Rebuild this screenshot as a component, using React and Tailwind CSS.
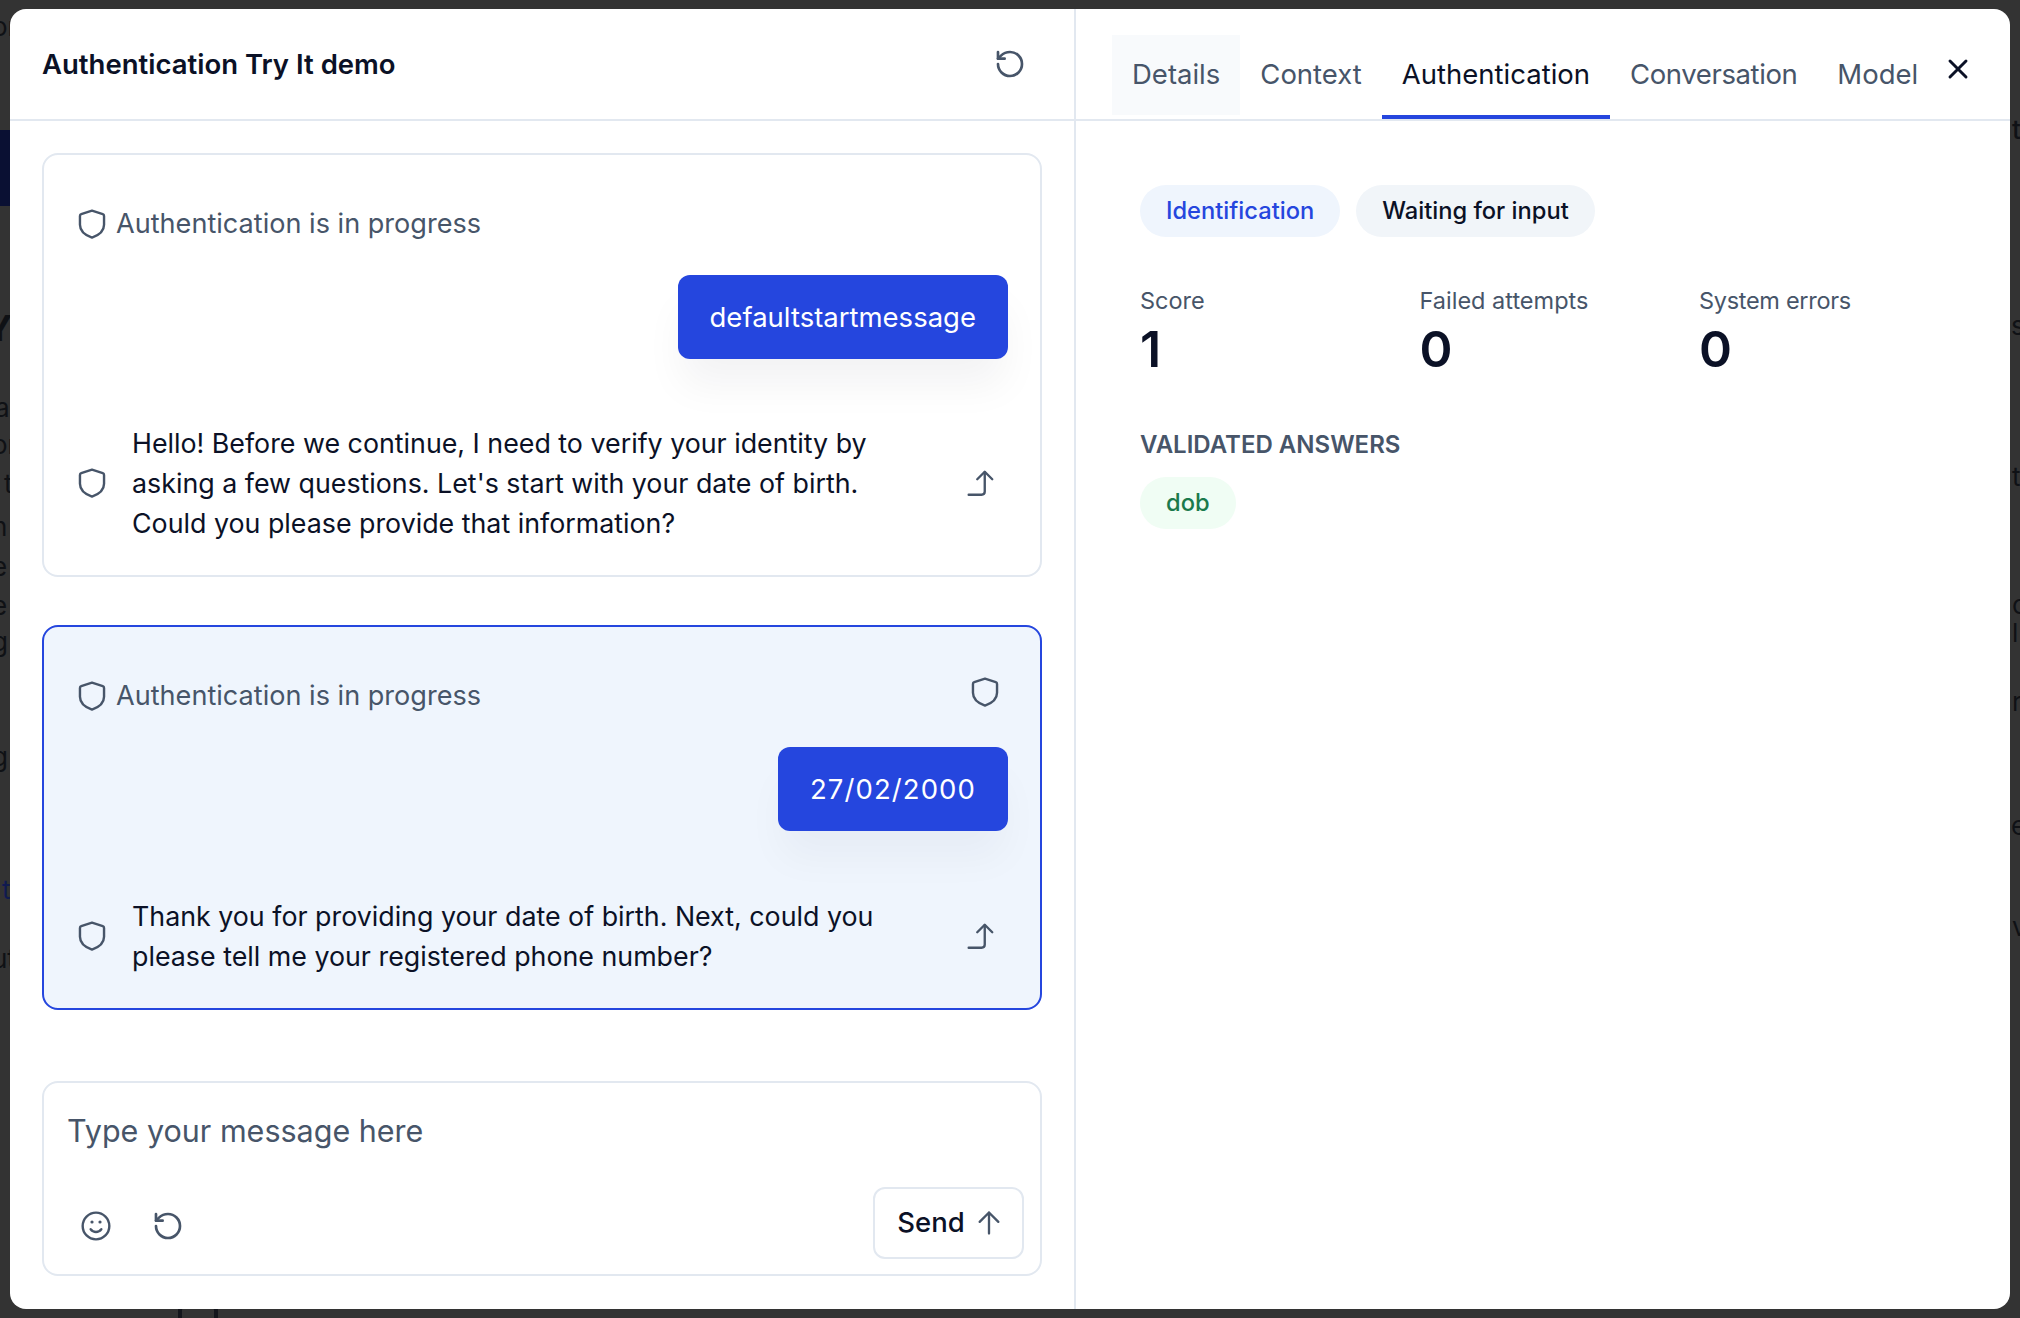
const refreshPath = "M3 12a9 9 0 1 0 9-9 9.75 9.75 0 0 0-6.74 2.74L3 8";

function Shield({ className = "w-[34px] h-[34px] shrink-0" }) {
  return (
    <svg viewBox="0 0 24 24" fill="none" stroke="#475569" strokeWidth="1.7" strokeLinecap="round" strokeLinejoin="round" className={className}>
      <path d="M12 2.6 L19.6 5 C20.2 5.2 20.5 5.7 20.5 6.3 V12.5 C20.5 17 16.5 20 12 21.6 C7.5 20 3.5 17 3.5 12.5 V6.3 C3.5 5.7 3.8 5.2 4.4 5 Z" />
    </svg>
  );
}

function Refresh({ className }) {
  return (
    <svg viewBox="0 0 24 24" fill="none" stroke="#475569" strokeWidth="2" strokeLinecap="round" strokeLinejoin="round" className={className}>
      <path d={refreshPath} />
      <path d="M3 3v5h5" />
    </svg>
  );
}

function Smile() {
  return (
    <svg viewBox="0 0 24 24" fill="none" stroke="#475569" strokeWidth="1.8" strokeLinecap="round" strokeLinejoin="round" className="w-[32px] h-[32px]">
      <circle cx="12" cy="12" r="10" />
      <path d="M8 14.5s1.5 2 4 2 4-2 4-2" />
      <path d="M9 9h.01M15 9h.01" strokeWidth="2.4" />
    </svg>
  );
}

function Forward() {
  return (
    <svg viewBox="0 0 28 28" fill="none" stroke="#475569" strokeWidth="2.2" strokeLinecap="round" strokeLinejoin="round" className="w-[30px] h-[30px]">
      <path d="M2.5 25h12c2 0 3-1 3-3V4" />
      <path d="M10.5 10.5 17.5 3.5l7 7" />
    </svg>
  );
}

function Status({ right }) {
  return (
    <div className="flex items-start justify-between h-[34px] pl-[23px] pr-[6px]">
      <div className="flex items-center gap-[7px] h-[34px] text-[27.1px] leading-[34px] text-[#475569]">
        <Shield />
        <span>Authentication is in progress</span>
      </div>
      {right && <div className="-mt-[4px]"><Shield /></div>}
    </div>
  );
}

function Bubble({ children, shadow, text }) {
  return (
    <div className="flex justify-end">
      <div className={`bg-[#2546de] text-white text-[27.5px] leading-[40px] px-[32px] py-[22px] rounded-[12px] ${text} ${shadow}`}>
        {children}
      </div>
    </div>
  );
}

function Reply({ children }) {
  return (
    <div className="flex items-center pl-[23px] pr-[12px]">
      <Shield />
      <p className="ml-[23px] w-[790px] text-[26.8px] leading-[40px] text-[#0b1126]">{children}</p>
      <div className="ml-auto"><Forward /></div>
    </div>
  );
}

function Tab({ children, className = "" }) {
  return (
    <div className={`h-[80px] flex items-center px-[20px] text-[27.5px] ${className}`}>{children}</div>
  );
}

function Stat({ label, value, labelClass = "" }) {
  return (
    <div>
      <div className={`text-[23.5px] leading-[32px] text-[#475569] ${labelClass}`}>{label}</div>
      <div className="text-[50px] leading-[64px] font-semibold text-[#0b1126]">{value}</div>
    </div>
  );
}

function Pill({ children, className }) {
  return <div className={`h-[52px] flex items-center px-[26px] rounded-full text-[23.7px] font-medium ${className}`}>{children}</div>;
}

function Frag({ children, className }) {
  return <div className={`absolute text-[#0f1115] text-[26px] leading-[30px] ${className}`}>{children}</div>;
}

export default function App() {
  return (
    <div className="relative h-[1318px] w-[2020px] overflow-hidden bg-[#333333] pt-[9px] pl-[10px]" style={{ fontFamily: "Inter, sans-serif" }}>
      <div className="absolute left-0 top-[130px] w-[10px] h-[76px] bg-[#0a1033]" />
      <Frag className="left-[-8px] top-[12px]">or</Frag>
      <Frag className="left-[-14px] top-[308px] text-[36px] leading-[40px] font-bold">YI</Frag>
      <Frag className="left-[-5px] top-[393px]">a</Frag>
      <Frag className="left-[-8px] top-[430px]">or</Frag>
      <Frag className="left-[4px] top-[469px]">t</Frag>
      <Frag className="left-[-8px] top-[512px]">n</Frag>
      <Frag className="left-[-8px] top-[552px]">e</Frag>
      <Frag className="left-[-8px] top-[591px]">e</Frag>
      <Frag className="left-[-8px] top-[627px]">g</Frag>
      <Frag className="left-[-8px] top-[742px]">g</Frag>
      <Frag className="left-[2px] top-[875px] text-[#101a50]">t</Frag>
      <Frag className="left-[-8px] top-[944px]">ut</Frag>
      <Frag className="left-[2012px] top-[115px] font-medium">t</Frag>
      <Frag className="left-[2011px] top-[311px]">s</Frag>
      <Frag className="left-[2012px] top-[462px]">t</Frag>
      <Frag className="left-[2012px] top-[590px]">o</Frag>
      <Frag className="left-[2012px] top-[618px]">l</Frag>
      <Frag className="left-[2012px] top-[687px]">r</Frag>
      <Frag className="left-[2011px] top-[811px]">e</Frag>
      <Frag className="left-[2012px] top-[912px]">v</Frag>
      <div className="absolute left-[178px] top-[1304px] w-[40px] h-[30px] border-4 border-[#14161c] rounded-[6px]" />
      <div className="relative flex w-[2000px] h-[1300px] bg-white rounded-[16px] overflow-hidden">
        <div className="w-[1066px] h-full border-r-2 border-[#e2e8f0] flex flex-col shrink-0">
          <div className="h-[112px] border-b-2 border-[#e2e8f0] flex items-center justify-between pl-[32px] pr-[48px] shrink-0">
            <h1 className="text-[27.5px] font-semibold text-[#0b1126] mt-[1px]">Authentication Try It demo</h1>
            <Refresh className="w-[32px] h-[32px]" />
          </div>
          <div className="pl-[32px] pr-[32px] flex flex-col flex-1">
            <div className="mt-[32px] h-[424px] border-2 border-[#e2e8f0] rounded-[16px] pt-[52px] pr-[32px] pl-[8px] bg-white">
              <Status />
              <div className="mt-[34px]"><Bubble shadow="shadow-[0_30px_40px_-4px_rgba(15,23,42,0.05)]">defaultstartmessage</Bubble></div>
              <div className="mt-[64px] -mr-[32px] pr-[32px]"><Reply>Hello! Before we continue, I need to verify your identity by asking a few questions. Let's start with your date of birth. Could you please provide that information?</Reply></div>
            </div>
            <div className="mt-[48px] h-[385px] border-2 border-[#2546de] rounded-[16px] pt-[52px] pr-[32px] pl-[8px] bg-[#eff5fd]">
              <Status right />
              <div className="mt-[34px]"><Bubble text="tracking-[1.1px]" shadow="shadow-[0_30px_40px_-4px_rgba(15,23,42,0.04)]">27/02/2000</Bubble></div>
              <div className="mt-[65px] -mr-[32px] pr-[32px]"><Reply>Thank you for providing your date of birth. Next, could you please tell me your registered phone number?</Reply></div>
            </div>
            <div className="mt-[71px] h-[195px] border-2 border-[#e2e8f0] rounded-[16px] flex flex-col pl-[23px] pr-[16px]">
              <div className="pt-[28px] text-[30.5px] leading-[40px] text-[#475569]">Type your message here</div>
              <div className="mt-auto mb-[15px] flex items-end justify-between">
                <div className="flex items-center gap-[40px] pl-[13px] pb-[17px]">
                  <Smile />
                  <Refresh className="w-[32px] h-[32px]" />
                </div>
                <div className="w-[151px] h-[72px] border-2 border-[#e2e8f0] rounded-[12px] flex items-center justify-center gap-[10px] pl-[3px] text-[27.5px] font-medium text-[#0b1126]">
                  Send
                  <svg viewBox="0 0 24 24" fill="none" stroke="#475569" strokeWidth="2" strokeLinecap="round" strokeLinejoin="round" className="w-[28px] h-[28px]">
                    <path d="M12 21V3M4 11l8-8 8 8" />
                  </svg>
                </div>
              </div>
            </div>
          </div>
        </div>
        <div className="flex-1 flex flex-col min-w-0">
          <div className="h-[112px] border-b-2 border-[#e2e8f0] flex items-end pl-[36px] relative shrink-0">
            <div className="flex text-[#475569]">
              <div className="pb-[4px] flex"><Tab className="bg-[#f8fafc]">Details</Tab></div>
              <div className="pb-[4px] flex"><Tab>Context</Tab></div>
              <div className="flex border-b-4 border-[#2546de]"><Tab className="text-[#0b1126]">Authentication</Tab></div>
              <div className="pb-[4px] flex"><Tab className="tracking-[-0.4px]">Conversation</Tab></div>
              <div className="pb-[4px] flex"><Tab>Model</Tab></div>
            </div>
            <svg viewBox="0 0 24 24" fill="none" stroke="#0b1126" strokeWidth="2.2" strokeLinecap="round" strokeLinejoin="round" className="absolute right-[36px] top-[44px] w-[32px] h-[32px]">
              <path d="M18 6 6 18M6 6l12 12" />
            </svg>
          </div>
          <div className="pl-[64px] pt-[64px]">
            <div className="flex gap-[16px]">
              <Pill className="bg-[#eff5fd] text-[#2546de]">Identification</Pill>
              <Pill className="bg-[#f1f5f9] text-[#0b1126]">Waiting for input</Pill>
            </div>
            <div className="mt-[48px] grid grid-cols-[279.5px_279.5px_279.5px]">
              <Stat label="Score" value="1" />
              <Stat label="Failed attempts" value="0" />
              <Stat label="System errors" value="0" labelClass="tracking-[-0.3px]" />
            </div>
            <div className="mt-[48px] text-[24px] leading-[32px] font-semibold text-[#475569]">VALIDATED ANSWERS</div>
            <div className="mt-[16px] flex">
              <Pill className="bg-[#f0fdf4] text-[#1b7a4c]">dob</Pill>
            </div>
          </div>
        </div>
      </div>
    </div>
  );
}
